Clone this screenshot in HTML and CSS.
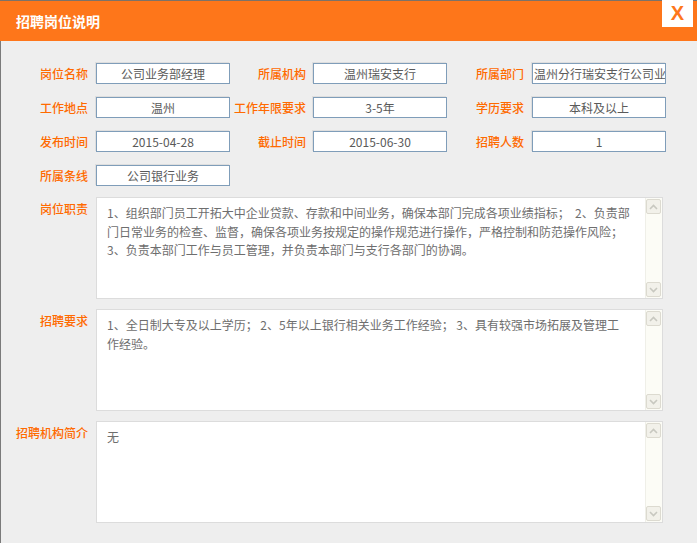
FILE: index.html
```html
<!DOCTYPE html>
<html lang="zh-CN">
<head>
<meta charset="utf-8">
<title>招聘岗位说明</title>
<link rel="stylesheet" href="styles.css">
</head>
<body>
<div class="dialog">
  <div class="hd">
    <h1 class="title">招聘岗位说明</h1>
    <span class="close">X</span>
  </div>
  <div class="bd">
    <div class="grid">
      <label class="lbl l1">岗位名称</label><div class="field">公司业务部经理</div>
      <label class="lbl l2">所属机构</label><div class="field">温州瑞安支行</div>
      <label class="lbl l3">所属部门</label><div class="field left">温州分行瑞安支行公司业</div>

      <label class="lbl l1">工作地点</label><div class="field">温州</div>
      <label class="lbl l2">工作年限要求</label><div class="field">3-5年</div>
      <label class="lbl l3">学历要求</label><div class="field">本科及以上</div>

      <label class="lbl l1">发布时间</label><div class="field">2015-04-28</div>
      <label class="lbl l2">截止时间</label><div class="field">2015-06-30</div>
      <label class="lbl l3">招聘人数</label><div class="field">1</div>

      <label class="lbl l1">所属条线</label><div class="field">公司银行业务</div>
    </div>

    <div class="area-row">
      <label class="alabel">岗位职责</label>
      <div class="area">
        <div class="area-text">1、组织部门员工开拓大中企业贷款、存款和中间业务，确保本部门完成各项业绩指标；&nbsp;&nbsp;2、负责部<br>门日常业务的检查、监督，确保各项业务按规定的操作规范进行操作，严格控制和防范操作风险；<br>3、负责本部门工作与员工管理，并负责本部门与支行各部门的协调。</div>
        <div class="sb"><span class="sb-btn"><svg width="9" height="6" viewBox="0 0 9 6"><path d="M1 5 L4.5 1.5 L8 5" fill="none" stroke="#c8c8c0" stroke-width="1.6"/></svg></span><span class="sb-btn"><svg width="9" height="6" viewBox="0 0 9 6"><path d="M1 1 L4.5 4.5 L8 1" fill="none" stroke="#c8c8c0" stroke-width="1.6"/></svg></span></div>
      </div>
    </div>

    <div class="area-row">
      <label class="alabel">招聘要求</label>
      <div class="area">
        <div class="area-text">1、全日制大专及以上学历；&nbsp;2、5年以上银行相关业务工作经验；&nbsp;3、具有较强市场拓展及管理工<br>作经验。</div>
        <div class="sb"><span class="sb-btn"><svg width="9" height="6" viewBox="0 0 9 6"><path d="M1 5 L4.5 1.5 L8 5" fill="none" stroke="#c8c8c0" stroke-width="1.6"/></svg></span><span class="sb-btn"><svg width="9" height="6" viewBox="0 0 9 6"><path d="M1 1 L4.5 4.5 L8 1" fill="none" stroke="#c8c8c0" stroke-width="1.6"/></svg></span></div>
      </div>
    </div>

    <div class="area-row">
      <label class="alabel">招聘机构简介</label>
      <div class="area">
        <div class="area-text">无</div>
        <div class="sb"><span class="sb-btn"><svg width="9" height="6" viewBox="0 0 9 6"><path d="M1 5 L4.5 1.5 L8 5" fill="none" stroke="#c8c8c0" stroke-width="1.6"/></svg></span><span class="sb-btn"><svg width="9" height="6" viewBox="0 0 9 6"><path d="M1 1 L4.5 4.5 L8 1" fill="none" stroke="#c8c8c0" stroke-width="1.6"/></svg></span></div>
      </div>
    </div>
  </div>
</div>
</body>
</html>
```

FILE: styles.css
```css
* { box-sizing: border-box; }

html, body {
  margin: 0;
  padding: 0;
  width: 697px;
  height: 543px;
  overflow: hidden;
  background: #eeeeee;
  font-family: "Noto Sans CJK SC", "Noto Sans", sans-serif;
}

.dialog {
  width: 697px;
  height: 543px;
  display: flex;
  flex-direction: column;
}

.hd {
  height: 41px;
  flex: none;
  background: #fe761a;
  border-top: 1px solid #7d7268;
  display: flex;
  justify-content: space-between;
  align-items: flex-start;
}

.title {
  margin: 0;
  padding: 10px 0 0 16px;
  font-size: 14px;
  line-height: 20px;
  font-weight: bold;
  color: #ffffff;
}

.close {
  margin: -1px 4px 0 0;
  width: 31px;
  height: 27px;
  background: #ffffff;
  color: #fe761a;
  font-family: "Liberation Sans", Arial, sans-serif;
  font-weight: bold;
  font-size: 20px;
  line-height: 27px;
  text-align: center;
}

.bd {
  flex: 1;
  border-left: 1px solid #7a7a7a;
  padding-top: 22px;
}

.grid {
  display: grid;
  grid-template-columns: 95px 134px 83px 134px 85px 134px;
  grid-auto-rows: 21px;
  row-gap: 13px;
}

.lbl {
  text-align: right;
  font-size: 12px;
  line-height: 21px;
  font-weight: 500;
  color: #ff6a00;
  white-space: nowrap;
}
.l1 { padding-right: 8px; }
.l2 { padding-right: 7px; }
.l3 { padding-right: 8px; }

.field {
  height: 21px;
  border: 1px solid #7f9db9;
  background: #ffffff;
  box-shadow: -1px -1px 0 #dedede;
  font-size: 12px;
  line-height: 19px;
  color: #5a5a5a;
  text-align: center;
  white-space: nowrap;
  overflow: hidden;
}
.field.left {
  text-align: left;
  padding-left: 1px;
}

.area-row {
  display: grid;
  grid-template-columns: 95px 567px;
  margin-top: 11px;
}
.area-row + .area-row { margin-top: 10px; }

.alabel {
  text-align: right;
  padding-right: 8px;
  padding-top: 3px;
  font-size: 12px;
  line-height: 18px;
  font-weight: 500;
  color: #ff6a00;
  white-space: nowrap;
}

.area {
  height: 102px;
  border: 1px solid #dcdcdc;
  background: #ffffff;
  display: flex;
}

.area-text {
  flex: 1;
  padding: 6px 0 0 10px;
  font-size: 12px;
  line-height: 18.5px;
  color: #6e6e6e;
  white-space: nowrap;
  overflow: hidden;
}

.sb {
  width: 17px;
  flex: none;
  background: #fcfcf6;
  border-left: 1px solid #efefe8;
  display: flex;
  flex-direction: column;
  justify-content: space-between;
  padding: 1px 1px 1px 0;
}

.sb-btn {
  width: 15px;
  height: 15px;
  border: 1px solid #dcdad0;
  border-radius: 2px;
  background: #f2f1ea;
  display: flex;
  align-items: center;
  justify-content: center;
}
```
